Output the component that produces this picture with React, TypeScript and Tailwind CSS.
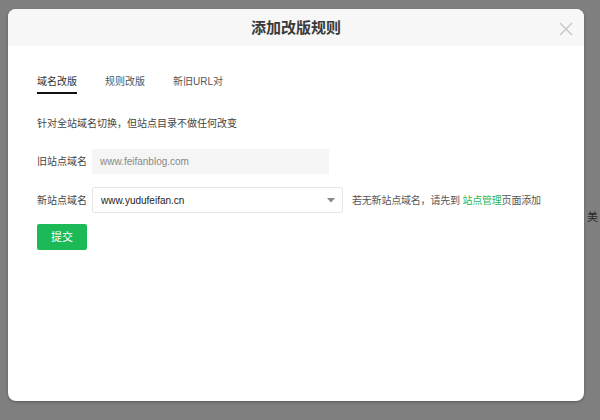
const font = { fontFamily: '"Liberation Sans", "Noto Sans CJK SC", sans-serif' };

const tabs = ["域名改版", "规则改版", "新旧URL对"];

const App = () => (
  <div
    className="relative w-[600px] h-[420px] bg-[#7f7f7f] pt-[9px] pl-[8px] overflow-hidden"
    style={font}
  >
    <span className="absolute left-[587px] top-[210px] text-[11px] leading-[14px] text-[#2a2a2a]">美</span>
    <div className="relative w-[576px] h-[392px] bg-white rounded-lg overflow-hidden shadow-[0_1px_3px_rgba(0,0,0,0.3)]">
      <div className="relative h-[37px] bg-[#f7f7f7] flex items-center justify-center">
        <h1 className="text-[15px] font-bold text-[#3a3a3a] leading-[20px]">添加改版规则</h1>
        <button className="absolute right-[11px] top-[13px] w-[14px] h-[14px]">
          <svg viewBox="0 0 14 14" className="w-[14px] h-[14px]">
            <path d="M1 1 L13 13 M13 1 L1 13" stroke="#c4c4c4" strokeWidth="1.3" fill="none" />
          </svg>
        </button>
      </div>

      <div className="px-[29px]">
        <div className="flex gap-[28px] mt-[29px]">
          {tabs.map((t, i) => (
            <div
              key={t}
              className={
                i === 0
                  ? "text-[10px] leading-[14px] text-[#333] pb-[3px] border-b-2 border-[#111]"
                  : "text-[10px] leading-[14px] text-[#555] pb-[3px] border-b-2 border-transparent"
              }
            >
              {t}
            </div>
          ))}
        </div>

        <p className="mt-[23px] text-[10px] leading-[14px] text-[#444]">
          针对全站域名切换，但站点目录不做任何改变
        </p>

        <div className="mt-[18px] flex items-center">
          <label className="w-[55px] text-[10px] text-[#444]">旧站点域名</label>
          <div className="w-[237px] h-[25px] bg-[#f5f5f5] pl-[8px] flex items-center text-[10px] text-[#888]">
            www.feifanblog.com
          </div>
        </div>

        <div className="mt-[13px] flex items-center">
          <label className="w-[55px] text-[10px] text-[#444]">新站点域名</label>
          <div className="w-[251px] h-[26px] border border-[#e6e6e6] rounded-[2px] pl-[8px] pr-[7px] flex items-center justify-between">
            <span className="text-[10px] text-[#222]">www.yudufeifan.cn</span>
            <svg viewBox="0 0 8 5" className="w-[8px] h-[5px]">
              <path d="M0 0 L8 0 L4 4.5 Z" fill="#888" />
            </svg>
          </div>
          <span className="ml-[9px] text-[10px] text-[#555] tracking-[-0.2px]">
            若无新站点域名，请先到 <span className="text-[#1fb55a]">站点管理</span>页面添加
          </span>
        </div>

        <button className="mt-[11px] w-[50px] h-[26px] bg-[#1cb957] rounded-[2px] text-white text-[11px] flex items-center justify-center">
          提交
        </button>
      </div>
    </div>
  </div>
);

export default App;
